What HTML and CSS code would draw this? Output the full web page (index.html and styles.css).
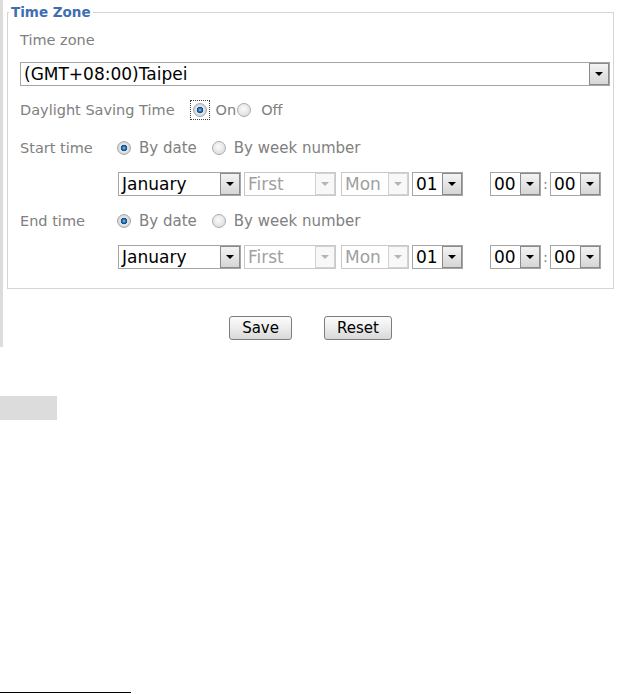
FILE: index.html
```html
<!DOCTYPE html>
<html lang="en">
<head>
  <meta charset="UTF-8" />
  <title>Time Zone</title>
  <link rel="stylesheet" href="styles.css">
</head>
<body>
  <div class="panel">
    <fieldset class="group">
      <legend>Time Zone</legend>
      <div class="group-body">
        <div class="label-row">Time zone</div>
        <div class="sel sel-wide"><span class="sel-text">(GMT+08:00)Taipei</span><span class="sel-btn"><i class="tri"></i></span></div>

        <div class="dst-row">
          <span class="dst-label">Daylight Saving Time</span>
          <span class="focus"><span class="radio on"></span></span>
          <span class="opt-on">On</span>
          <span class="radio"></span>
          <span class="opt-off">Off</span>
        </div>

        <div class="field-row">
          <span class="field-label">Start time</span>
          <span class="choice first"><span class="radio on"></span>By date</span>
          <span class="choice"><span class="radio"></span>By week number</span>
        </div>
        <div class="sel-row">
          <div class="sel w-month"><span class="sel-text">January</span><span class="sel-btn"><i class="tri"></i></span></div>
          <div class="sel w-week off"><span class="sel-text">First</span><span class="sel-btn"><i class="tri"></i></span></div>
          <div class="sel w-day off"><span class="sel-text">Mon</span><span class="sel-btn"><i class="tri"></i></span></div>
          <div class="sel w-num"><span class="sel-text">01</span><span class="sel-btn"><i class="tri"></i></span></div>
          <div class="sel w-num hour"><span class="sel-text">00</span><span class="sel-btn"><i class="tri"></i></span></div>
          <span class="colon">:</span>
          <div class="sel w-num"><span class="sel-text">00</span><span class="sel-btn"><i class="tri"></i></span></div>
        </div>

        <div class="field-row end">
          <span class="field-label">End time</span>
          <span class="choice first"><span class="radio on"></span>By date</span>
          <span class="choice"><span class="radio"></span>By week number</span>
        </div>
        <div class="sel-row">
          <div class="sel w-month"><span class="sel-text">January</span><span class="sel-btn"><i class="tri"></i></span></div>
          <div class="sel w-week off"><span class="sel-text">First</span><span class="sel-btn"><i class="tri"></i></span></div>
          <div class="sel w-day off"><span class="sel-text">Mon</span><span class="sel-btn"><i class="tri"></i></span></div>
          <div class="sel w-num"><span class="sel-text">01</span><span class="sel-btn"><i class="tri"></i></span></div>
          <div class="sel w-num hour"><span class="sel-text">00</span><span class="sel-btn"><i class="tri"></i></span></div>
          <span class="colon">:</span>
          <div class="sel w-num"><span class="sel-text">00</span><span class="sel-btn"><i class="tri"></i></span></div>
        </div>
      </div>
    </fieldset>
    <div class="actions">
      <button class="btn">Save</button>
      <button class="btn">Reset</button>
    </div>
  </div>
  <div class="tab-stub"></div>
  <div class="foot-rule"></div>
</body>
</html>
```

FILE: styles.css
```css
html, body {
  margin: 0;
  padding: 0;
  background: #fff;
  font-family: "DejaVu Sans", Verdana, sans-serif;
  font-size: 14.5px;
  color: #808080;
}
.panel {
  width: 607px;
  border-left: 3px solid #dcdcdc;
  padding: 4px 4px 7px 4px;
}
.group {
  margin: 0;
  padding: 8px 3px 19px 12px;
  border: 1px solid #d5d5d5;
}
.group legend {
  margin-left: -11px;
  padding: 0 2px;
  font-size: 13.5px;
  font-weight: bold;
  line-height: 16px;
  color: #3f6db3;
}
.group-body {
  display: flex;
  flex-direction: column;
  gap: 10px;
}
.label-row {
  height: 24px;
  line-height: 24px;
}
.sel {
  display: flex;
  height: 24px;
  box-sizing: border-box;
  border: 1px solid #a5a5a5;
  background: #fff;
  color: #000;
  font-size: 17px;
}
.sel-text {
  flex: 1;
  padding-left: 3px;
  line-height: 22px;
  white-space: nowrap;
  overflow: hidden;
}
.sel-btn {
  width: 20px;
  flex: none;
  box-sizing: border-box;
  border: 1px solid #8a8a8a;
  background: linear-gradient(#f3f3f3, #d6d6d6);
  display: flex;
  align-items: center;
  justify-content: center;
}
.tri {
  width: 0;
  height: 0;
  border-left: 4px solid transparent;
  border-right: 4px solid transparent;
  border-top: 4px solid #000;
}
.sel.off {
  border-color: #c9c9c9;
  color: #a0a0a0;
}
.sel.off .sel-btn {
  border-color: #d2d2d2;
  background: #f8f8f8;
}
.sel.off .tri {
  border-top-color: #b5b5b5;
}
.sel-wide {
  width: 590px;
}
.dst-row, .field-row {
  height: 28px;
  display: flex;
  align-items: center;
}
.field-row.end {
  margin-top: 1px;
}
.radio {
  width: 14px;
  height: 14px;
  flex: none;
  box-sizing: border-box;
  border-radius: 50%;
  border: 1px solid #ababab;
  background: radial-gradient(circle at 45% 40%, #fbfbfb, #d6d6d6);
}
.radio.on {
  background: radial-gradient(circle, #8fd0f5 0, #2b7cc2 1.5px, #15467a 3px, #ececec 3.6px, #cfcfcf 6px);
}
.focus {
  display: flex;
  margin-left: 15px;
  padding: 2px;
  border: 1px dotted #444;
}
.opt-on {
  margin: 0 1px 0 6px;
}
.opt-off {
  margin-left: 10px;
}
.field-label {
  width: 97px;
}
.choice {
  display: flex;
  align-items: center;
  gap: 8px;
  font-size: 15px;
}
.choice.first {
  margin-right: 15px;
}
.sel-row {
  display: flex;
  align-items: center;
  padding-left: 98px;
}
.w-month { width: 123px; }
.w-week { width: 92px; margin-left: 3px; }
.w-day { width: 68px; margin-left: 5px; }
.w-num { width: 51px; margin-left: 3px; }
.w-num.hour { margin-left: 27px; }
.colon {
  width: 9px;
  text-align: center;
  color: #808080;
}
.sel-row .colon + .w-num {
  margin-left: 0;
}
.actions {
  display: flex;
  justify-content: center;
  gap: 32px;
  margin-top: 27px;
}
.btn {
  height: 24px;
  padding: 0 12px;
  font-family: "DejaVu Sans", Verdana, sans-serif;
  font-size: 15px;
  color: #000;
  border: 1px solid #7d7d7d;
  border-radius: 3px;
  background: linear-gradient(#fcfcfc, #ececec 50%, #d8d8d8);
}
.tab-stub {
  width: 57px;
  height: 24px;
  margin-top: 49px;
  background: #dcdcdc;
}
.foot-rule {
  width: 131px;
  height: 1px;
  margin-top: 272px;
  background: #000;
}
```
